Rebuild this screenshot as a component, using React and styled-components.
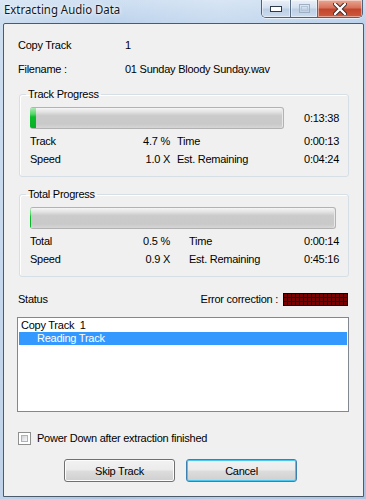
import React from 'react';
import styled, { createGlobalStyle } from 'styled-components';

const Global = createGlobalStyle`
  html, body { margin: 0; padding: 0; background: #b9d1ea; }
  body { font-family: "Liberation Sans", Arial, sans-serif; }
  * { box-sizing: border-box; }
`;

const Window = styled.div`
  width: 366px;
  height: 499px;
  display: flex;
  flex-direction: column;
  padding: 0 2px 2px 3px;
  overflow: hidden;
  background:
    linear-gradient(90deg, rgba(255,255,255,0.25) 0%, rgba(255,255,255,0) 30%, rgba(255,255,255,0.18) 60%, rgba(255,255,255,0) 100%),
    linear-gradient(180deg, #cfe0f2 0%, #bdd3ec 22px, #aac4e2 100%);
  font-family: "Liberation Sans", Arial, sans-serif;
  font-size: 11px;
  letter-spacing: -0.25px;
  color: #000;
`;

const TitleBar = styled.div`
  height: 23px;
  flex: none;
  display: flex;
  align-items: flex-start;
  justify-content: space-between;
`;

const Title = styled.div`
  margin-top: 2px;
  line-height: 16px;
  font-size: 12px;
  letter-spacing: 0;
  font-family: "Noto Sans", "Open Sans", sans-serif;
  color: #101820;
  text-shadow: 0 0 6px rgba(255,255,255,0.9), 0 0 2px rgba(255,255,255,0.9);
  padding-left: 1px;
  transform: scaleX(0.95);
  transform-origin: left center;
`;

const Caption = styled.div`
  display: flex;
  height: 18px;
  margin-right: 1px;
  border: 1px solid #4e607a;
  border-top: none;
  border-radius: 0 0 5px 5px;
  overflow: hidden;
  box-shadow: 0 1px 0 rgba(255,255,255,0.6);
`;

const CapBtn = styled.div`
  width: ${p => p.$w}px;
  display: flex;
  align-items: center;
  justify-content: center;
  border-left: ${p => (p.$first ? 'none' : '1px solid #5a6d87')};
  background: ${p =>
    p.$close
      ? 'linear-gradient(180deg, #e9a793 0%, #d8735c 45%, #c2452c 55%, #cf5a3e 100%)'
      : 'linear-gradient(180deg, #eaf1f9 0%, #d3e0ef 45%, #bccfe6 55%, #cddcee 100%)'};
  box-shadow: inset 0 0 0 1px rgba(255,255,255,0.45);
`;

const Client = styled.div`
  flex: 1;
  display: flex;
  flex-direction: column;
  background: #f0f0f0;
  border: 1px solid #4c5b6c;
  border-radius: 2px 2px 0 0;
  padding: 0 14px 0 13px;
`;

const InfoGrid = styled.div`
  margin: 13px 0 0 1px;
  display: grid;
  grid-template-columns: 107px 1fr;
  row-gap: 8px;
  line-height: 16px;
`;

const Group = styled.fieldset`
  margin: ${p => p.$top}px 0 0 2px;
  padding: 5px 9px 9px 10px;
  border: 1px solid #d5dfe5;
  border-radius: 3px;
  box-shadow: inset 1px 1px 0 #fff;
  min-inline-size: 0;
`;

const Legend = styled.legend`
  padding: 0 2px;
  margin-left: -4px;
  line-height: 16px;
`;

const BarRow = styled.div`
  display: flex;
  align-items: center;
`;

const Bar = styled.div`
  width: ${p => p.$w}px;
  height: 22px;
  flex: none;
  display: flex;
  border: 1px solid #b2b2b2;
  border-left: none;
  border-radius: 3px;
  overflow: hidden;
  background: linear-gradient(180deg, #f6f6f6 0%, #e4e4e4 18%, #cbcbcb 38%, #c9c9c9 80%, #d6d6d6 100%);
  box-shadow: inset -1px 0 0 #e8e8e8;
`;

const Fill = styled.div`
  height: 100%;
  background: linear-gradient(180deg, #a6eaaf 0%, #55d869 30%, #0cbb2c 45%, #06b025 100%);
`;

const BarTime = styled.div`
  flex: 1;
  text-align: right;
  line-height: 16px;
`;

const Stats = styled.div`
  margin-top: 4px;
  display: grid;
  grid-template-columns: 60px 80px 1fr auto;
  row-gap: 2px;
  line-height: 16px;
`;

const Right = styled.div`
  text-align: right;
`;

const Label2 = styled.div`
  padding-left: ${p => p.$split}px;
`;

const StatusRow = styled.div`
  margin: 14px 1px 0 1px;
  display: flex;
  align-items: center;
  line-height: 16px;
`;

const Grow = styled.div`
  flex: 1;
`;

const Led = styled.div`
  margin-left: 5px;
  width: 65px;
  height: 13px;
  display: grid;
  grid-template-columns: repeat(16, 3px);
  grid-auto-rows: 3px;
  gap: 1px;
  padding: 1px;
  background: #000;
`;

const LedCell = styled.div`
  background: #7a0000;
`;

const ListBox = styled.div`
  margin-top: 10px;
  height: 95px;
  flex: none;
  background: #fff;
  border: 1px solid #828790;
  padding: 1px 1px;
`;

const Item = styled.div`
  height: 13px;
  line-height: 13px;
  padding-left: ${p => (p.$indent ? 18 : 2)}px;
  background: ${p => (p.$selected ? '#3399ff' : 'transparent')};
  color: ${p => (p.$selected ? '#fff' : '#000')};
  white-space: pre;
`;

const CheckRow = styled.label`
  margin: 18px 0 0 1px;
  display: flex;
  align-items: center;
  gap: 6px;
  line-height: 16px;
`;

const CheckBox = styled.span`
  width: 13px;
  height: 13px;
  border: 1px solid #8e8f8f;
  background: #fff;
  padding: 2px;
  display: flex;
  &::after {
    content: '';
    flex: 1;
    border: 1px solid #aeb3b9;
    background: linear-gradient(135deg, #cfd2d6 0%, #e9ebee 60%, #f8f8f8 100%);
  }
`;

const Buttons = styled.div`
  margin: 13px 0 0 47px;
  display: flex;
  gap: 11px;
`;

const Button = styled.button`
  width: 111px;
  height: 23px;
  font: inherit;
  letter-spacing: -0.25px;
  color: #000;
  border: 1px solid ${p => (p.$default ? '#3c7fb1' : '#707070')};
  border-radius: 3px;
  background: linear-gradient(180deg, #f2f2f2 0%, #ebebeb 48%, #dddddd 52%, #cfcfcf 100%);
  box-shadow: inset 0 0 0 1px ${p => (p.$default ? '#48c8f0' : '#fcfcfc')};
  padding: 0;
`;

function Group1() {
  return (
    <Group $top={9}>
      <Legend>Track Progress</Legend>
      <BarRow>
        <Bar $w={254}>
          <Fill style={{ width: '6px' }} />
        </Bar>
        <BarTime>0:13:38</BarTime>
      </BarRow>
      <Stats>
        <div>Track</div>
        <Right>4.7 %</Right>
        <Label2 $split={7}>Time</Label2>
        <Right>0:00:13</Right>
        <div>Speed</div>
        <Right>1.0 X</Right>
        <Label2 $split={7}>Est. Remaining</Label2>
        <Right>0:04:24</Right>
      </Stats>
    </Group>
  );
}

function Group2() {
  return (
    <Group $top={9}>
      <Legend>Total Progress</Legend>
      <BarRow>
        <Bar $w={306}>
          <Fill style={{ width: '1px' }} />
        </Bar>
      </BarRow>
      <Stats>
        <div>Total</div>
        <Right>0.5 %</Right>
        <Label2 $split={19}>Time</Label2>
        <Right>0:00:14</Right>
        <div>Speed</div>
        <Right>0.9 X</Right>
        <Label2 $split={19}>Est. Remaining</Label2>
        <Right>0:45:16</Right>
      </Stats>
    </Group>
  );
}

export default function App() {
  return (
    <>
      <Global />
      <Window>
        <TitleBar>
          <Title>Extracting Audio Data</Title>
          <Caption>
            <CapBtn $w={28} $first>
              <svg width="12" height="6" viewBox="0 0 12 6">
                <rect x="0.5" y="0.5" width="11" height="5" fill="#fff" stroke="#2d3a4c" />
              </svg>
            </CapBtn>
            <CapBtn $w={27}>
              <svg width="11" height="9" viewBox="0 0 11 9">
                <rect x="0.5" y="0.5" width="10" height="8" fill="none" stroke="#9fb0c5" />
                <rect x="2.5" y="2.5" width="6" height="4" fill="none" stroke="#b5c4d6" />
              </svg>
            </CapBtn>
            <CapBtn $w={45} $close>
              <svg width="14" height="12" viewBox="0 0 14 12">
                <path d="M2 1 L12 11 M12 1 L2 11" stroke="#3a2a2a" strokeWidth="4.2" strokeLinecap="round" />
                <path d="M2 1 L12 11 M12 1 L2 11" stroke="#fff" strokeWidth="2.4" strokeLinecap="round" />
              </svg>
            </CapBtn>
          </Caption>
        </TitleBar>
        <Client>
          <InfoGrid>
            <div>Copy Track</div>
            <div>1</div>
            <div>Filename :</div>
            <div>01 Sunday Bloody Sunday.wav</div>
          </InfoGrid>
          <Group1 />
          <Group2 />
          <StatusRow>
            <div>Status</div>
            <Grow />
            <div>Error correction :</div>
            <Led>
              {Array.from({ length: 48 }, (_, i) => (
                <LedCell key={i} />
              ))}
            </Led>
          </StatusRow>
          <ListBox>
            <Item>{'Copy Track  1'}</Item>
            <Item $selected $indent>Reading Track</Item>
          </ListBox>
          <CheckRow>
            <CheckBox />
            <span>Power Down after extraction finished</span>
          </CheckRow>
          <Buttons>
            <Button>Skip Track</Button>
            <Button $default>Cancel</Button>
          </Buttons>
        </Client>
      </Window>
    </>
  );
}
